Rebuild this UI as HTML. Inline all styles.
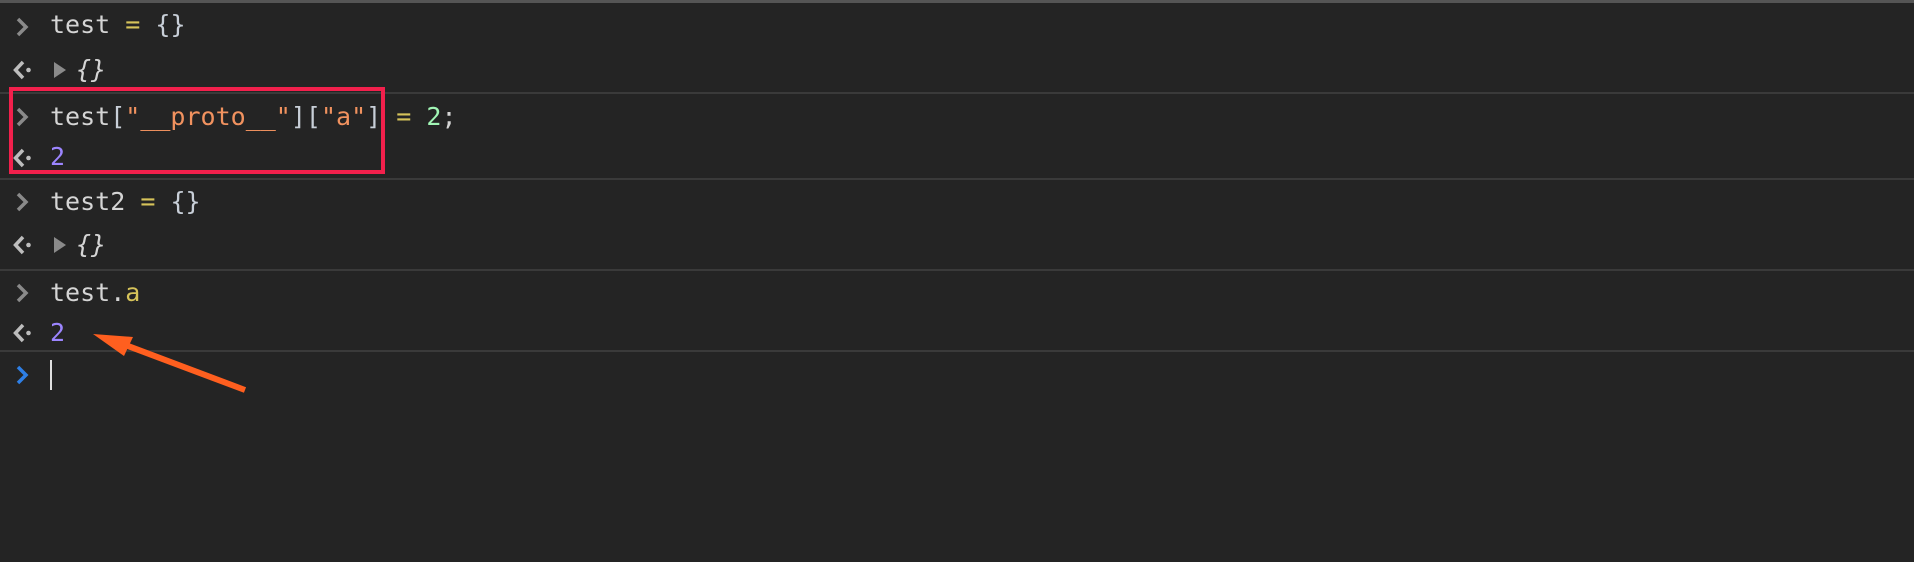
<!DOCTYPE html>
<html><head><meta charset="utf-8"><style>
html,body{margin:0;padding:0;width:1914px;height:562px;background:#242424;overflow:hidden}
body{position:relative;font-family:"DejaVu Sans Mono","Liberation Mono",monospace;font-size:25px;color:#d5d5d5}
.top{position:absolute;left:0;top:0;width:1914px;height:3px;background:#555}
.sep{position:absolute;left:0;width:1914px;height:2px;background:#3a3a3a}
.ln{position:absolute;left:50px;white-space:pre;line-height:30px}
.ic{position:absolute;left:12px}
.y{color:#d6c35a}.o{color:#f1925f}.g{color:#a1f5b5}.p{color:#9c85ff}.b{color:#c8cfd8}
i{font-style:italic}
.box{position:absolute;left:9px;top:87px;width:368px;height:79px;border:4px solid #f2204c}
</style></head><body>
<div class="top"></div>
<div class="sep" style="top:92px"></div>
<div class="sep" style="top:178px"></div>
<div class="sep" style="top:269px"></div>
<div class="sep" style="top:350px"></div>

<svg width="0" height="0" style="position:absolute"><defs>
<g id="pr"><path d="M5 3 L13 11 L5 19" fill="none" stroke="#8a8a8a" stroke-width="3.5"/></g>
<g id="rs"><path d="M11 3 L3.5 11 L11 19" fill="none" stroke="#bdbdbd" stroke-width="3.5"/><circle cx="16.5" cy="11" r="2.3" fill="#bdbdbd"/></g>
</defs></svg>

<svg class="ic" style="top:16px;left:13px" width="24" height="22"><use href="#pr"/></svg>
<div class="ln" style="top:10px">test <span class="y">=</span> <span class="b">{}</span></div>
<svg class="ic" style="top:59px" width="24" height="22"><use href="#rs"/></svg>
<svg style="position:absolute;left:54px;top:62px" width="13" height="17"><path d="M0 0 L12 8 L0 16Z" fill="#8a8a8a"/></svg>
<div class="ln" style="top:55px;left:76px"><i>{}</i></div>

<svg class="ic" style="top:106px;left:13px" width="24" height="22"><use href="#pr"/></svg>
<div class="ln" style="top:102px">test<span class="b">[</span><span class="o">"__proto__"</span><span class="b">][</span><span class="o">"a"</span><span class="b">]</span> <span class="y">=</span> <span class="g">2</span>;</div>
<svg class="ic" style="top:147px" width="24" height="22"><use href="#rs"/></svg>
<div class="ln p" style="top:142px">2</div>

<svg class="ic" style="top:191px;left:13px" width="24" height="22"><use href="#pr"/></svg>
<div class="ln" style="top:187px">test2 <span class="y">=</span> <span class="b">{}</span></div>
<svg class="ic" style="top:234px" width="24" height="22"><use href="#rs"/></svg>
<svg style="position:absolute;left:54px;top:237px" width="13" height="17"><path d="M0 0 L12 8 L0 16Z" fill="#8a8a8a"/></svg>
<div class="ln" style="top:230px;left:76px"><i>{}</i></div>

<svg class="ic" style="top:282px;left:13px" width="24" height="22"><use href="#pr"/></svg>
<div class="ln" style="top:278px">test.<span class="y">a</span></div>
<svg class="ic" style="top:322px" width="24" height="22"><use href="#rs"/></svg>
<div class="ln p" style="top:318px">2</div>

<svg class="ic" style="top:364px;left:13px" width="24" height="22"><path d="M5 3 L13 11 L5 19" fill="none" stroke="#2e7fe6" stroke-width="3.5"/></svg>
<div style="position:absolute;left:50px;top:360px;width:2px;height:30px;background:#e0e0e0"></div>

<div class="box"></div>

<svg style="position:absolute;left:0;top:0" width="300" height="420">
<line x1="245" y1="390" x2="120" y2="343" stroke="#ff5f1f" stroke-width="6"/>
<path d="M93 334 L133 337 L124 356Z" fill="#ff5f1f"/>
</svg>
</body></html>
